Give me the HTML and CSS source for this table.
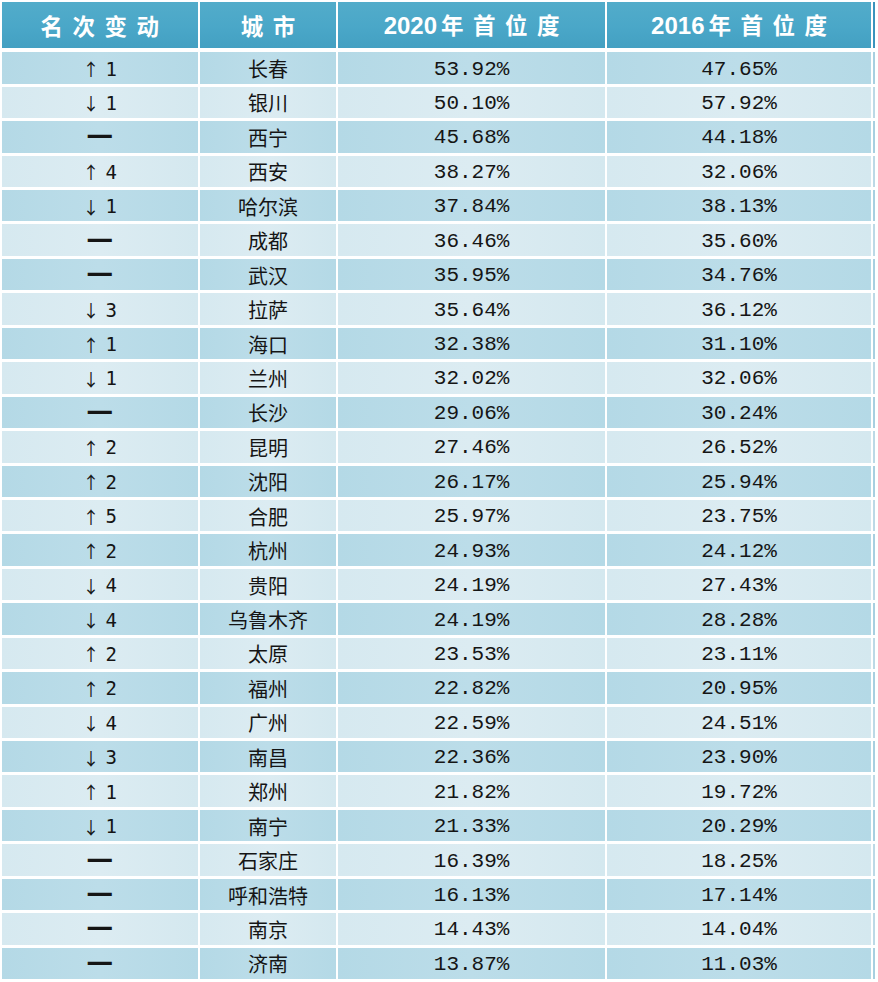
FILE: index.html
```html
<!DOCTYPE html>
<html lang="zh-CN">
<head>
<meta charset="utf-8">
<title>首位度排名</title>
<link rel="stylesheet" href="styles.css">
</head>
<body>
<div class="table">
  <div class="row head">
    <div class="cell"><span class="ht"><span class="hz">名次变动</span></span></div>
    <div class="cell"><span class="ht"><span class="hz">城市</span></span></div>
    <div class="cell"><span class="ht"><span class="num">2020</span><span class="hz">年首位度</span></span></div>
    <div class="cell"><span class="ht"><span class="num">2016</span><span class="hz">年首位度</span></span></div>
    <div class="edge"></div>
  </div>
  <div class="body">
    <div class="row dark"><div class="cell chg"><span class="ar">↑</span>1</div><div class="cell city">长春</div><div class="cell pct">53.92%</div><div class="cell pct">47.65%</div><div class="edge"></div></div>
    <div class="row light"><div class="cell chg"><span class="ar">↓</span>1</div><div class="cell city">银川</div><div class="cell pct">50.10%</div><div class="cell pct">57.92%</div><div class="edge"></div></div>
    <div class="row dark"><div class="cell chg"><span class="dash">—</span></div><div class="cell city">西宁</div><div class="cell pct">45.68%</div><div class="cell pct">44.18%</div><div class="edge"></div></div>
    <div class="row light"><div class="cell chg"><span class="ar">↑</span>4</div><div class="cell city">西安</div><div class="cell pct">38.27%</div><div class="cell pct">32.06%</div><div class="edge"></div></div>
    <div class="row dark"><div class="cell chg"><span class="ar">↓</span>1</div><div class="cell city">哈尔滨</div><div class="cell pct">37.84%</div><div class="cell pct">38.13%</div><div class="edge"></div></div>
    <div class="row light"><div class="cell chg"><span class="dash">—</span></div><div class="cell city">成都</div><div class="cell pct">36.46%</div><div class="cell pct">35.60%</div><div class="edge"></div></div>
    <div class="row dark"><div class="cell chg"><span class="dash">—</span></div><div class="cell city">武汉</div><div class="cell pct">35.95%</div><div class="cell pct">34.76%</div><div class="edge"></div></div>
    <div class="row light"><div class="cell chg"><span class="ar">↓</span>3</div><div class="cell city">拉萨</div><div class="cell pct">35.64%</div><div class="cell pct">36.12%</div><div class="edge"></div></div>
    <div class="row dark"><div class="cell chg"><span class="ar">↑</span>1</div><div class="cell city">海口</div><div class="cell pct">32.38%</div><div class="cell pct">31.10%</div><div class="edge"></div></div>
    <div class="row light"><div class="cell chg"><span class="ar">↓</span>1</div><div class="cell city">兰州</div><div class="cell pct">32.02%</div><div class="cell pct">32.06%</div><div class="edge"></div></div>
    <div class="row dark"><div class="cell chg"><span class="dash">—</span></div><div class="cell city">长沙</div><div class="cell pct">29.06%</div><div class="cell pct">30.24%</div><div class="edge"></div></div>
    <div class="row light"><div class="cell chg"><span class="ar">↑</span>2</div><div class="cell city">昆明</div><div class="cell pct">27.46%</div><div class="cell pct">26.52%</div><div class="edge"></div></div>
    <div class="row dark"><div class="cell chg"><span class="ar">↑</span>2</div><div class="cell city">沈阳</div><div class="cell pct">26.17%</div><div class="cell pct">25.94%</div><div class="edge"></div></div>
    <div class="row light"><div class="cell chg"><span class="ar">↑</span>5</div><div class="cell city">合肥</div><div class="cell pct">25.97%</div><div class="cell pct">23.75%</div><div class="edge"></div></div>
    <div class="row dark"><div class="cell chg"><span class="ar">↑</span>2</div><div class="cell city">杭州</div><div class="cell pct">24.93%</div><div class="cell pct">24.12%</div><div class="edge"></div></div>
    <div class="row light"><div class="cell chg"><span class="ar">↓</span>4</div><div class="cell city">贵阳</div><div class="cell pct">24.19%</div><div class="cell pct">27.43%</div><div class="edge"></div></div>
    <div class="row dark"><div class="cell chg"><span class="ar">↓</span>4</div><div class="cell city">乌鲁木齐</div><div class="cell pct">24.19%</div><div class="cell pct">28.28%</div><div class="edge"></div></div>
    <div class="row light"><div class="cell chg"><span class="ar">↑</span>2</div><div class="cell city">太原</div><div class="cell pct">23.53%</div><div class="cell pct">23.11%</div><div class="edge"></div></div>
    <div class="row dark"><div class="cell chg"><span class="ar">↑</span>2</div><div class="cell city">福州</div><div class="cell pct">22.82%</div><div class="cell pct">20.95%</div><div class="edge"></div></div>
    <div class="row light"><div class="cell chg"><span class="ar">↓</span>4</div><div class="cell city">广州</div><div class="cell pct">22.59%</div><div class="cell pct">24.51%</div><div class="edge"></div></div>
    <div class="row dark"><div class="cell chg"><span class="ar">↓</span>3</div><div class="cell city">南昌</div><div class="cell pct">22.36%</div><div class="cell pct">23.90%</div><div class="edge"></div></div>
    <div class="row light"><div class="cell chg"><span class="ar">↑</span>1</div><div class="cell city">郑州</div><div class="cell pct">21.82%</div><div class="cell pct">19.72%</div><div class="edge"></div></div>
    <div class="row dark"><div class="cell chg"><span class="ar">↓</span>1</div><div class="cell city">南宁</div><div class="cell pct">21.33%</div><div class="cell pct">20.29%</div><div class="edge"></div></div>
    <div class="row light"><div class="cell chg"><span class="dash">—</span></div><div class="cell city">石家庄</div><div class="cell pct">16.39%</div><div class="cell pct">18.25%</div><div class="edge"></div></div>
    <div class="row dark"><div class="cell chg"><span class="dash">—</span></div><div class="cell city">呼和浩特</div><div class="cell pct">16.13%</div><div class="cell pct">17.14%</div><div class="edge"></div></div>
    <div class="row light"><div class="cell chg"><span class="dash">—</span></div><div class="cell city">南京</div><div class="cell pct">14.43%</div><div class="cell pct">14.04%</div><div class="edge"></div></div>
    <div class="row dark"><div class="cell chg"><span class="dash">—</span></div><div class="cell city">济南</div><div class="cell pct">13.87%</div><div class="cell pct">11.03%</div><div class="edge"></div></div>
  </div>
</div>
</body>
</html>
```

FILE: styles.css
```css
html, body {
  margin: 0;
  padding: 0;
  background: #ffffff;
}

.table {
  padding: 2px 0 0 2px;
  width: 876px;
  box-sizing: border-box;
  font-family: "Noto Sans CJK SC", sans-serif;
  color: #151515;
}

.row {
  display: grid;
  grid-template-columns: 195.5px 136.5px 266.5px 264px 2px;
  column-gap: 2.2px;
  height: 31.45px;
}

.head {
  height: 45.7px;
  margin-bottom: 4.6px;
}

.body {
  display: flex;
  flex-direction: column;
  gap: 3px;
}

.cell {
  display: flex;
  align-items: center;
  justify-content: center;
  white-space: nowrap;
}

.head .cell {
  background: linear-gradient(180deg, #52acca 0%, #4aa7c8 55%, #43a0c2 100%);
  color: #ffffff;
  font-weight: 700;
}

.head .edge {
  background: #3a94bd;
}

.ht {
  line-height: 1;
  padding-top: 1px;
}

.hz {
  font-size: 22.5px;
  letter-spacing: 9.5px;
  margin-right: -9.5px;
}

.num {
  font-family: "Liberation Sans", "DejaVu Sans", sans-serif;
  font-size: 24px;
  font-weight: 700;
  margin-right: 4px;
}

.dark .cell {
  background: linear-gradient(90deg, #b4d9e6 0%, #bcdde9 50%, #b4d9e6 100%);
}

.dark .edge {
  background: #a8cfe0;
}

.light .cell {
  background: linear-gradient(90deg, #d6e9f0 0%, #dcecf2 50%, #d4e8ef 100%);
}

.light .edge {
  background: #bcd9e6;
}

.chg {
  font-family: "DejaVu Sans Mono", monospace;
  font-size: 19px;
  padding-top: 1px;
}

.ar {
  font-family: "Noto Sans CJK SC", sans-serif;
  font-size: 17px;
  margin-right: 6px;
}

.dash {
  font-family: "DejaVu Sans", sans-serif;
  font-size: 27px;
  font-weight: 700;
  line-height: 20px;
  padding-bottom: 4px;
  color: #151515;
}

.city {
  font-size: 20px;
  padding-top: 1px;
}

.pct {
  font-family: "Liberation Mono", "Courier New", monospace;
  font-size: 21px;
  padding-top: 2px;
}
```
